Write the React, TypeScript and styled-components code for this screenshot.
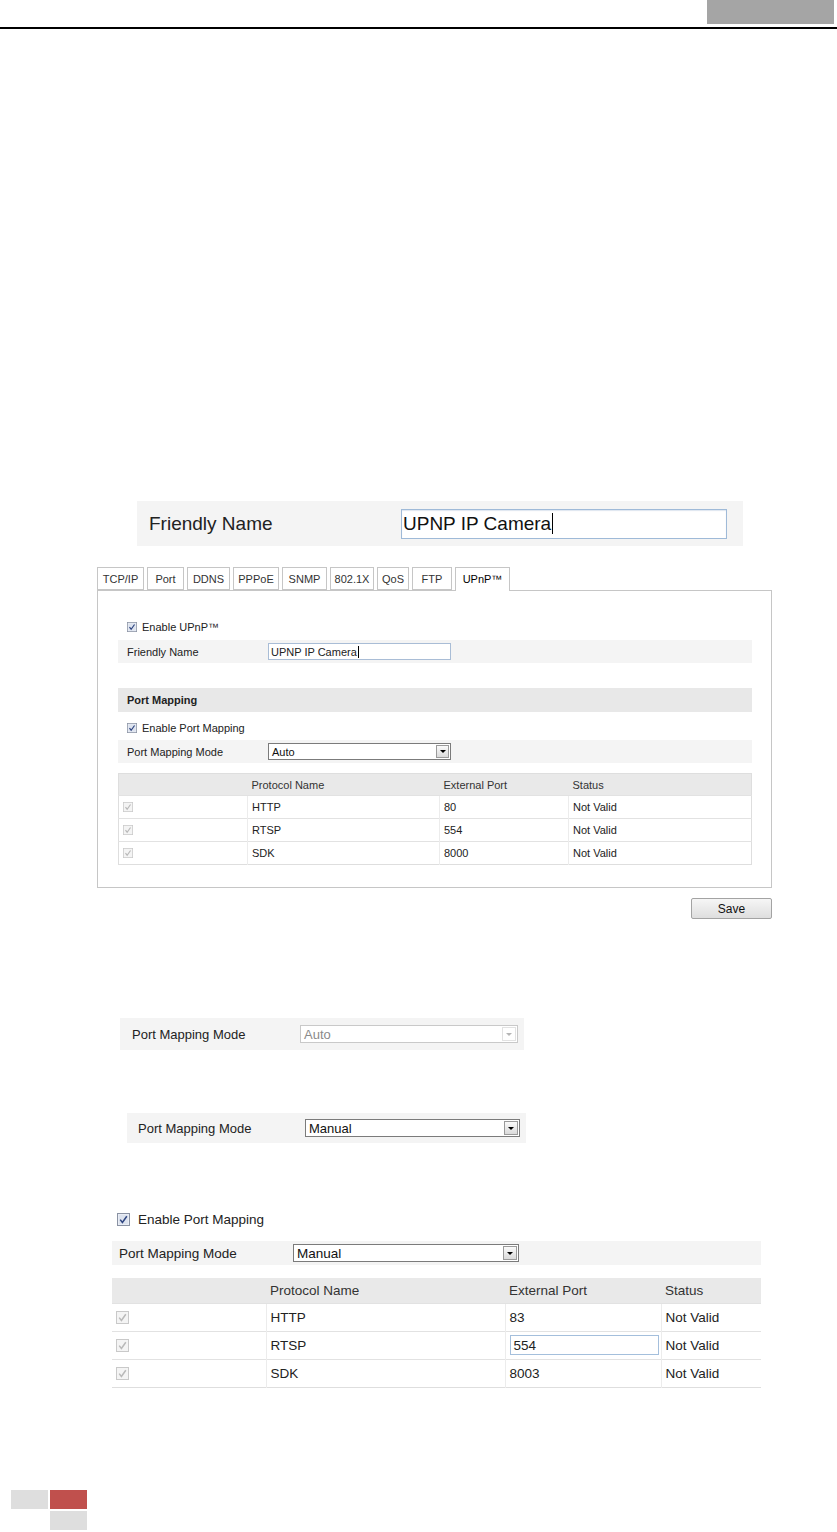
import React from "react";
import styled, { createGlobalStyle } from "styled-components";

const GlobalStyle = createGlobalStyle`
  html, body { margin: 0; padding: 0; background: #fff; }
  body { font-family: "Liberation Sans", Arial, sans-serif; color: #222; }
  * { box-sizing: border-box; }
`;

const Page = styled.div`
  width: 837px;
  min-height: 1532px;
  display: flex;
  flex-direction: column;
`;

const Header = styled.header`
  display: flex;
  justify-content: flex-end;
  height: 29px;
  border-bottom: 2px solid #000;
  padding-right: 3px;
`;

const HeaderTab = styled.div`
  width: 127px;
  height: 24px;
  background: #a5a5a5;
`;

/* ---------- Figure 1: large friendly name ---------- */
const LargeField = styled.div`
  margin: 472px 0 0 137px;
  width: 606px;
  height: 45px;
  background: #f4f4f4;
  display: flex;
  align-items: center;
  padding-left: 12px;
`;

const LargeLabel = styled.span`
  width: 252px;
  font-size: 19px;
  color: #222;
`;

const LargeInput = styled.div`
  width: 326px;
  height: 30px;
  border: 1px solid #9fbad8;
  background: #fff;
  display: flex;
  align-items: center;
  padding-left: 1px;
  font-size: 19px;
  color: #111;
  box-shadow: inset 0 1px 1px rgba(120, 150, 190, 0.25);
`;

const Caret = styled.span<{ $h: number }>`
  display: inline-block;
  width: 1px;
  height: ${(p) => p.$h}px;
  background: #000;
  margin-left: 1px;
`;

/* ---------- Figure 2: full config panel ---------- */
const ConfigFigure = styled.section`
  margin: 21px 0 0 97px;
  width: 675px;
  display: flex;
  flex-direction: column;
`;

const TabBar = styled.div`
  display: flex;
  align-items: flex-end;
  gap: 3px;
  height: 23px;
`;

const Tab = styled.div<{ $w: number; $active?: boolean }>`
  width: ${(p) => p.$w}px;
  height: ${(p) => (p.$active ? 24 : 23)}px;
  margin-bottom: ${(p) => (p.$active ? -1 : 0)}px;
  border: 1px solid #c6c6c6;
  border-bottom: ${(p) => (p.$active ? "none" : "1px solid #c6c6c6")};
  background: #fff;
  position: relative;
  z-index: ${(p) => (p.$active ? 1 : 0)};
  display: flex;
  align-items: center;
  justify-content: center;
  padding-bottom: ${(p) => (p.$active ? 1 : 0)}px;
  font-size: 11px;
  color: ${(p) => (p.$active ? "#000" : "#333")};
`;

const Panel = styled.div`
  height: 298px;
  border: 1px solid #c6c6c6;
  padding: 24px 19px 0 20px;
  display: flex;
  flex-direction: column;
  font-size: 11px;
  color: #222;
`;

const CheckRow = styled.div<{ $h: number; $mt?: number; $pl: number; $gap: number }>`
  height: ${(p) => p.$h}px;
  margin-top: ${(p) => p.$mt ?? 0}px;
  padding-left: ${(p) => p.$pl}px;
  display: flex;
  align-items: center;
  gap: ${(p) => p.$gap}px;
`;

const FieldRow = styled.div<{ $h: number; $mt?: number; $pl: number }>`
  height: ${(p) => p.$h}px;
  margin-top: ${(p) => p.$mt ?? 0}px;
  padding-left: ${(p) => p.$pl}px;
  background: #f4f4f4;
  display: flex;
  align-items: center;
`;

const FieldLabel = styled.span<{ $w: number }>`
  width: ${(p) => p.$w}px;
  flex: none;
`;

const TextInput = styled.div<{ $w: number; $h: number }>`
  width: ${(p) => p.$w}px;
  height: ${(p) => p.$h}px;
  border: 1px solid #a9bdd6;
  background: #fff;
  display: flex;
  align-items: center;
  padding-left: 2px;
`;

const SectionHeader = styled.div`
  height: 24px;
  margin-top: 25px;
  background: #e8e8e8;
  padding-left: 9px;
  display: flex;
  align-items: center;
  font-weight: bold;
  color: #222;
`;

const SelectBox = styled.div<{ $w: number; $h: number; $disabled?: boolean }>`
  width: ${(p) => p.$w}px;
  height: ${(p) => p.$h}px;
  border: 1px solid ${(p) => (p.$disabled ? "#c9c9c9" : "#7b7b7b")};
  background: #fff;
  display: flex;
  align-items: center;
  justify-content: space-between;
  padding: 0 1px 0 3px;
  color: ${(p) => (p.$disabled ? "#8a8a8a" : "#111")};
`;

const SelectArrow = styled.span<{ $size: number; $disabled?: boolean }>`
  width: ${(p) => p.$size}px;
  height: ${(p) => p.$size}px;
  border: 1px solid ${(p) => (p.$disabled ? "#e2e2e2" : "#9a9a9a")};
  background: ${(p) => (p.$disabled ? "#fff" : "linear-gradient(#fafafa, #dadada)")};
  display: flex;
  align-items: center;
  justify-content: center;
  &::after {
    content: "";
    border-left: 3px solid transparent;
    border-right: 3px solid transparent;
    border-top: 3px solid ${(p) => (p.$disabled ? "#b5b5b5" : "#000")};
  }
`;

const DataTable = styled.table<{ $fs: number; $mt: number; $boxed?: boolean }>`
  width: 100%;
  margin-top: ${(p) => p.$mt}px;
  border-collapse: collapse;
  table-layout: fixed;
  font-size: ${(p) => p.$fs}px;
  color: #222;
  border: ${(p) => (p.$boxed ? "1px solid #dedede" : "none")};
  border-bottom: 1px solid #dedede;
`;

const HeadCell = styled.th<{ $h: number }>`
  height: ${(p) => p.$h}px;
  background: #e9e9e9;
  font-weight: normal;
  text-align: left;
  padding: 0 0 0 4px;
  color: #333;
`;

const BodyCell = styled.td<{ $h: number }>`
  height: ${(p) => p.$h}px;
  padding: 0 0 0 4px;
  border-top: 1px solid #e2e2e2;
  border-left: 1px solid #ececec;
  vertical-align: middle;
  &:first-child { border-left: none; }
`;

const SaveRow = styled.div`
  display: flex;
  justify-content: flex-end;
  margin-top: 10px;
`;

const SaveButton = styled.button`
  width: 81px;
  height: 21px;
  border: 1px solid #a3a3a3;
  border-radius: 2px;
  background: linear-gradient(#f6f6f6, #dedede);
  font-family: "Liberation Sans", Arial, sans-serif;
  font-size: 12px;
  color: #111;
  padding: 0;
`;

/* ---------- Figures 3/4: mode rows ---------- */
const ModeFigure = styled.div<{ $mt: number; $ml: number; $w: number; $h: number; $pl: number }>`
  margin: ${(p) => p.$mt}px 0 0 ${(p) => p.$ml}px;
  width: ${(p) => p.$w}px;
  height: ${(p) => p.$h}px;
  background: #f4f4f4;
  padding-left: ${(p) => p.$pl}px;
  display: flex;
  align-items: center;
  font-size: 13px;
  color: #222;
`;

/* ---------- Figure 5 ---------- */
const MappingFigure = styled.section`
  margin: 64px 0 0 112px;
  width: 649px;
  display: flex;
  flex-direction: column;
  font-size: 13.5px;
  color: #222;
`;

const PortInput = styled.div`
  width: 149px;
  height: 20px;
  border: 1px solid #a4bfdc;
  background: #fff;
  display: flex;
  align-items: center;
  padding-left: 3px;
`;

/* ---------- Footer ---------- */
const Footer = styled.footer`
  margin-top: auto;
  padding: 0 0 2px 11px;
  display: grid;
  grid-template-columns: 37px 37px;
  grid-auto-rows: 19px;
  gap: 2px;
`;

const FooterCell = styled.div<{ $color: string }>`
  background: ${(p) => p.$color};
`;

/* ---------- icons ---------- */
const CheckSvg = styled.svg`
  flex: none;
  display: block;
`;

function CheckBox({ size, disabled }: { size: number; disabled?: boolean }) {
  return (
    <CheckSvg width={size} height={size} viewBox="0 0 13 13">
      <rect
        x="0.5"
        y="0.5"
        width="12"
        height="12"
        fill={disabled ? "#f4f4f4" : "#e9edf5"}
        stroke={disabled ? "#c9c9c9" : "#8a92a3"}
      />
      {!disabled && <rect x="2" y="2" width="9" height="9" fill="#dde3ee" />}
      <path
        d="M3.2 6.6 L5.4 9.4 L9.8 3.2"
        fill="none"
        stroke={disabled ? "#b9b9b9" : "#2f4580"}
        strokeWidth="1.5"
      />
    </CheckSvg>
  );
}

const tabs: { label: string; w: number }[] = [
  { label: "TCP/IP", w: 47 },
  { label: "Port", w: 37 },
  { label: "DDNS", w: 43 },
  { label: "PPPoE", w: 46 },
  { label: "SNMP", w: 45 },
  { label: "802.1X", w: 44 },
  { label: "QoS", w: 32 },
  { label: "FTP", w: 40 },
  { label: "UPnP™", w: 55 },
];

const panelRows = [
  { name: "HTTP", port: "80", status: "Not Valid" },
  { name: "RTSP", port: "554", status: "Not Valid" },
  { name: "SDK", port: "8000", status: "Not Valid" },
];

const manualRows = [
  { name: "HTTP", port: "83", status: "Not Valid", editing: false },
  { name: "RTSP", port: "554", status: "Not Valid", editing: true },
  { name: "SDK", port: "8003", status: "Not Valid", editing: false },
];

export default function App() {
  return (
    <>
      <GlobalStyle />
      <Page>
        <Header>
          <HeaderTab />
        </Header>

        <LargeField>
          <LargeLabel>Friendly Name</LargeLabel>
          <LargeInput>
            UPNP IP Camera
            <Caret $h={21} />
          </LargeInput>
        </LargeField>

        <ConfigFigure>
          <TabBar>
            {tabs.map((t) => (
              <Tab key={t.label} $w={t.w} $active={t.label === "UPnP™"}>
                {t.label}
              </Tab>
            ))}
          </TabBar>
          <Panel>
            <CheckRow $h={23} $pl={9} $gap={5}>
              <CheckBox size={10} />
              Enable UPnP™
            </CheckRow>
            <FieldRow $h={23} $mt={2} $pl={9}>
              <FieldLabel $w={141}>Friendly Name</FieldLabel>
              <TextInput $w={183} $h={17}>
                UPNP IP Camera
                <Caret $h={12} />
              </TextInput>
            </FieldRow>
            <SectionHeader>Port Mapping</SectionHeader>
            <CheckRow $h={23} $mt={4} $pl={9} $gap={5}>
              <CheckBox size={10} />
              Enable Port Mapping
            </CheckRow>
            <FieldRow $h={23} $mt={1} $pl={9}>
              <FieldLabel $w={141}>Port Mapping Mode</FieldLabel>
              <SelectBox $w={183} $h={17}>
                Auto
                <SelectArrow $size={13} />
              </SelectBox>
            </FieldRow>
            <DataTable $fs={11} $mt={10} $boxed>
              <colgroup>
                <col style={{ width: 129 }} />
                <col style={{ width: 192 }} />
                <col style={{ width: 129 }} />
                <col />
              </colgroup>
              <thead>
                <tr>
                  <HeadCell $h={22} />
                  <HeadCell $h={22}>Protocol Name</HeadCell>
                  <HeadCell $h={22}>External Port</HeadCell>
                  <HeadCell $h={22}>Status</HeadCell>
                </tr>
              </thead>
              <tbody>
                {panelRows.map((r) => (
                  <tr key={r.name}>
                    <BodyCell $h={23}>
                      <CheckBox size={10} disabled />
                    </BodyCell>
                    <BodyCell $h={23}>{r.name}</BodyCell>
                    <BodyCell $h={23}>{r.port}</BodyCell>
                    <BodyCell $h={23}>{r.status}</BodyCell>
                  </tr>
                ))}
              </tbody>
            </DataTable>
          </Panel>
          <SaveRow>
            <SaveButton>Save</SaveButton>
          </SaveRow>
        </ConfigFigure>

        <ModeFigure $mt={99} $ml={120} $w={404} $h={32} $pl={12}>
          <FieldLabel $w={168}>Port Mapping Mode</FieldLabel>
          <SelectBox $w={218} $h={18} $disabled>
            Auto
            <SelectArrow $size={14} $disabled />
          </SelectBox>
        </ModeFigure>

        <ModeFigure $mt={63} $ml={127} $w={399} $h={30} $pl={11}>
          <FieldLabel $w={167}>Port Mapping Mode</FieldLabel>
          <SelectBox $w={215} $h={18}>
            Manual
            <SelectArrow $size={14} />
          </SelectBox>
        </ModeFigure>

        <MappingFigure>
          <CheckRow $h={24} $pl={5} $gap={8}>
            <CheckBox size={13} />
            Enable Port Mapping
          </CheckRow>
          <FieldRow $h={24} $mt={10} $pl={7}>
            <FieldLabel $w={174}>Port Mapping Mode</FieldLabel>
            <SelectBox $w={226} $h={18}>
              Manual
              <SelectArrow $size={14} />
            </SelectBox>
          </FieldRow>
          <DataTable $fs={13.5} $mt={13}>
            <colgroup>
              <col style={{ width: 154 }} />
              <col style={{ width: 239 }} />
              <col style={{ width: 156 }} />
              <col />
            </colgroup>
            <thead>
              <tr>
                <HeadCell $h={25} />
                <HeadCell $h={25}>Protocol Name</HeadCell>
                <HeadCell $h={25}>External Port</HeadCell>
                <HeadCell $h={25}>Status</HeadCell>
              </tr>
            </thead>
            <tbody>
              {manualRows.map((r) => (
                <tr key={r.name}>
                  <BodyCell $h={28}>
                    <CheckBox size={13} disabled />
                  </BodyCell>
                  <BodyCell $h={28}>{r.name}</BodyCell>
                  <BodyCell $h={28}>
                    {r.editing ? <PortInput>{r.port}</PortInput> : r.port}
                  </BodyCell>
                  <BodyCell $h={28}>{r.status}</BodyCell>
                </tr>
              ))}
            </tbody>
          </DataTable>
        </MappingFigure>

        <Footer>
          <FooterCell $color="#dedede" />
          <FooterCell $color="#c0504d" />
          <span />
          <FooterCell $color="#dedede" />
        </Footer>
      </Page>
    </>
  );
}
